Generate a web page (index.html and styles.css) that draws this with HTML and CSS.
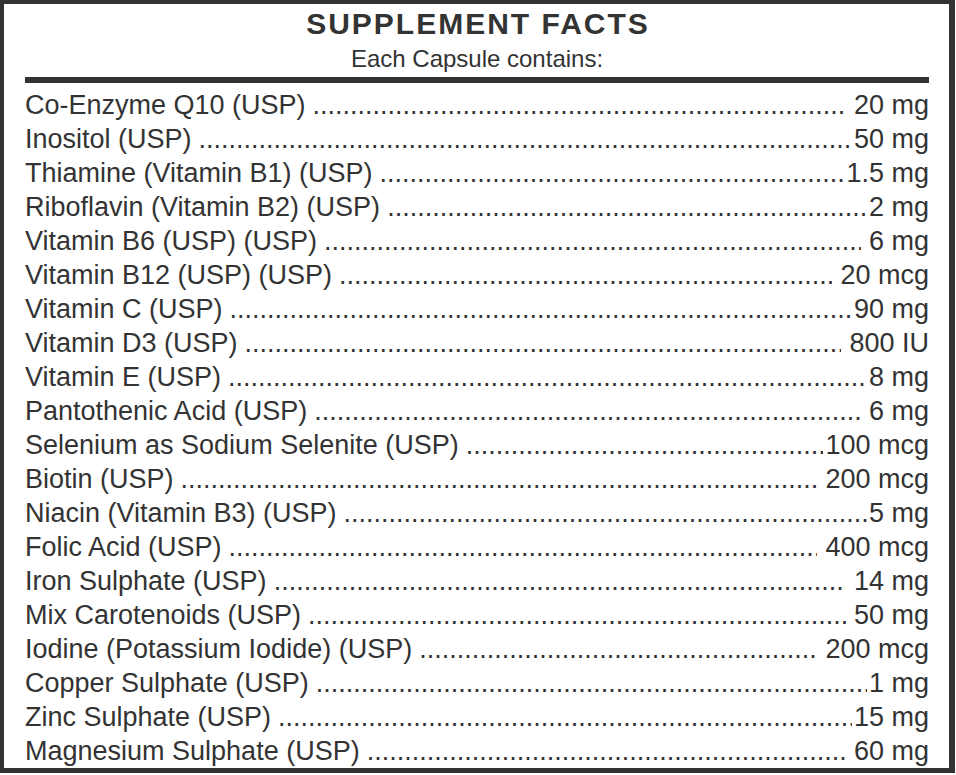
FILE: index.html
```html
<!DOCTYPE html>
<html lang="en">
<head>
<meta charset="utf-8">
<title>Supplement Facts</title>
<link rel="stylesheet" href="styles.css">
</head>
<body>
<div class="panel">
  <header class="head">
    <h1 class="title">SUPPLEMENT FACTS</h1>
    <p class="sub">Each Capsule contains:</p>
  </header>
  <div class="rule"></div>
  <ul class="list">
    <li class="row"><span class="name">Co-Enzyme Q10 (USP)</span><span class="dots"></span><span class="val sp">20 mg</span></li>
    <li class="row"><span class="name">Inositol (USP)</span><span class="dots"></span><span class="val">50 mg</span></li>
    <li class="row"><span class="name">Thiamine (Vitamin B1) (USP)</span><span class="dots"></span><span class="val">1.5 mg</span></li>
    <li class="row"><span class="name">Riboflavin (Vitamin B2) (USP)</span><span class="dots"></span><span class="val">2 mg</span></li>
    <li class="row"><span class="name">Vitamin B6 (USP) (USP)</span><span class="dots"></span><span class="val sp">6 mg</span></li>
    <li class="row"><span class="name">Vitamin B12 (USP) (USP)</span><span class="dots"></span><span class="val sp">20 mcg</span></li>
    <li class="row"><span class="name">Vitamin C (USP)</span><span class="dots"></span><span class="val">90 mg</span></li>
    <li class="row"><span class="name">Vitamin D3 (USP)</span><span class="dots"></span><span class="val sp">800 IU</span></li>
    <li class="row"><span class="name">Vitamin E (USP)</span><span class="dots"></span><span class="val">8 mg</span></li>
    <li class="row"><span class="name">Pantothenic Acid (USP)</span><span class="dots"></span><span class="val sp">6 mg</span></li>
    <li class="row"><span class="name">Selenium as Sodium Selenite (USP)</span><span class="dots"></span><span class="val">100 mcg</span></li>
    <li class="row"><span class="name">Biotin (USP)</span><span class="dots"></span><span class="val sp">200 mcg</span></li>
    <li class="row"><span class="name">Niacin (Vitamin B3) (USP)</span><span class="dots"></span><span class="val">5 mg</span></li>
    <li class="row"><span class="name">Folic Acid (USP)</span><span class="dots"></span><span class="val sp">400 mcg</span></li>
    <li class="row"><span class="name">Iron Sulphate (USP)</span><span class="dots"></span><span class="val sp">14 mg</span></li>
    <li class="row"><span class="name">Mix Carotenoids (USP)</span><span class="dots"></span><span class="val sp">50 mg</span></li>
    <li class="row"><span class="name">Iodine (Potassium Iodide) (USP)</span><span class="dots"></span><span class="val sp">200 mcg</span></li>
    <li class="row"><span class="name">Copper Sulphate (USP)</span><span class="dots"></span><span class="val">1 mg</span></li>
    <li class="row"><span class="name">Zinc Sulphate (USP)</span><span class="dots"></span><span class="val">15 mg</span></li>
    <li class="row"><span class="name">Magnesium Sulphate (USP)</span><span class="dots"></span><span class="val sp">60 mg</span></li>
  </ul>
</div>
</body>
</html>
```

FILE: styles.css
```css
html, body {
  margin: 0;
  padding: 0;
  background: #ffffff;
}

.panel {
  box-sizing: border-box;
  width: 955px;
  height: 773px;
  border-style: solid;
  border-color: #333333;
  border-width: 4px 6px 5px 4px;
  padding: 4px 20px 0 21px;
  font-family: "Liberation Sans", Arial, sans-serif;
  color: #333333;
  background: #ffffff;
}

.head {
  text-align: center;
}

.title {
  margin: 0;
  font-size: 30px;
  line-height: 32px;
  font-weight: bold;
  letter-spacing: 2px;
  padding-left: 2px;
}

.sub {
  margin: 6px 0 0;
  font-size: 24px;
  line-height: 26px;
}

.rule {
  margin-top: 5px;
  height: 6px;
  background: #333333;
}

.list {
  list-style: none;
  margin: 5px 0 0;
  padding: 0;
}

.row {
  display: flex;
  font-size: 27px;
  line-height: 34px;
  white-space: nowrap;
}

.name {
  flex: none;
  padding-right: 7px;
}

.dots {
  flex: 1 1 auto;
  overflow: hidden;
  min-width: 0;
}

.dots::before {
  content: "..................................................................................................................................................................................................................................";
}

.val {
  flex: none;
  padding-left: 2px;
}

.val.sp {
  padding-left: 8px;
}
```
